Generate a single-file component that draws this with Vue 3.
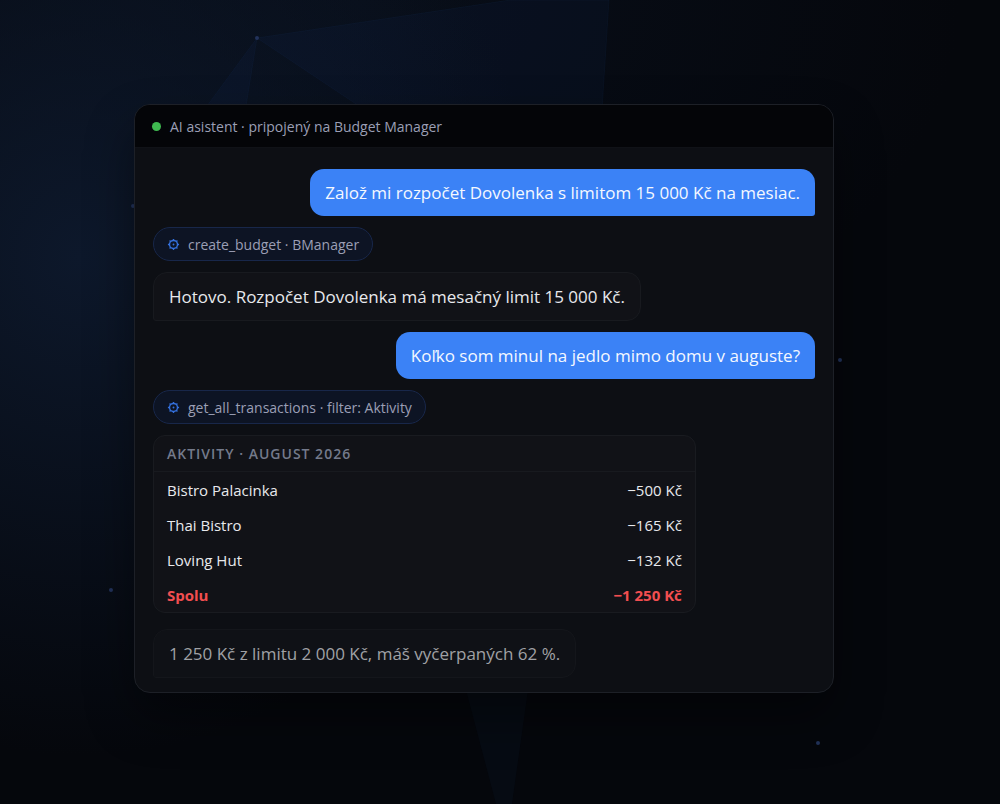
<script setup>
const messages = [
  { kind: 'user', text: 'Založ mi rozpočet Dovolenka s limitom 15 000 Kč na mesiac.' },
  { kind: 'tool', text: 'create_budget · BManager' },
  { kind: 'bot', text: 'Hotovo. Rozpočet Dovolenka má mesačný limit 15 000 Kč.' },
  { kind: 'user', text: 'Koľko som minul na jedlo mimo domu v auguste?' },
  { kind: 'tool', text: 'get_all_transactions · filter: Aktivity' },
]

const rows = [
  { name: 'Bistro Palacinka', amount: '−500 Kč' },
  { name: 'Thai Bistro', amount: '−165 Kč' },
  { name: 'Loving Hut', amount: '−132 Kč' },
]
</script>

<template>
  <main class="scene">
    <svg class="backdrop" viewBox="0 0 1000 804" preserveAspectRatio="xMidYMid slice" aria-hidden="true">
      <g class="facets">
        <path d="M257 38 510 0H609L602 110H365Z" />
        <path d="M257 38 207 106H246Z" />
        <path class="faint" d="M466 690H528L512 804H496Z" />
      </g>
      <g class="nodes">
        <circle cx="257" cy="38" r="2" />
        <circle cx="133" cy="206" r="2" />
        <circle cx="840" cy="360" r="2" />
        <circle cx="111" cy="590" r="2" />
        <circle cx="818" cy="743" r="2" />
      </g>
    </svg>

    <section class="panel">
      <header class="panel-head">
        <span class="status"></span>
        <h1>AI asistent · pripojený na Budget Manager</h1>
      </header>

      <div class="chat">
        <template v-for="(m, i) in messages" :key="i">
          <div v-if="m.kind === 'tool'" class="chip">
            <svg class="gear" viewBox="0 0 14 14" aria-hidden="true">
              <circle cx="7" cy="7" r="4.3" />
              <path d="M7 1v1.7M7 11.3v1.7M1 7h1.7M11.3 7h1.7M2.8 2.8l1.2 1.2M10 10l1.2 1.2M2.8 11.2l1.2-1.2M10 4l1.2-1.2" />
              <circle class="hub" cx="7" cy="7" r="1" />
            </svg>
            <span>{{ m.text }}</span>
          </div>
          <p v-else class="bubble" :class="m.kind">{{ m.text }}</p>
        </template>

        <div class="card">
          <table>
            <thead>
              <tr><th colspan="2" scope="colgroup">AKTIVITY · AUGUST 2026</th></tr>
            </thead>
            <tbody>
              <tr v-for="r in rows" :key="r.name">
                <td>{{ r.name }}</td>
                <td class="amount">{{ r.amount }}</td>
              </tr>
            </tbody>
            <tfoot>
              <tr>
                <td>Spolu</td>
                <td class="amount">−1 250 Kč</td>
              </tr>
            </tfoot>
          </table>
        </div>

        <p class="bubble bot pending">1 250 Kč z limitu 2 000 Kč, máš vyčerpaných 62 %.</p>
      </div>
    </section>
  </main>
</template>

<style>
body {
  margin: 0;
  background: #05070c;
}
</style>

<style scoped>
.scene {
  position: relative;
  box-sizing: border-box;
  min-height: 100vh;
  padding: 104px 166px 104px 134px;
  overflow: hidden;
  background:
    radial-gradient(ellipse 46% 62% at 8% 32%, #0d182b 0%, rgba(13, 24, 43, 0) 100%),
    radial-gradient(ellipse 60% 50% at 36% 0%, #080e19 0%, rgba(8, 14, 25, 0) 100%),
    #05070c;
  font-family: "Open Sans", "Noto Sans", sans-serif;
}

.backdrop {
  position: absolute;
  inset: 0;
  width: 100%;
  height: 100%;
}

.facets path {
  fill: rgba(24, 50, 120, 0.09);
  stroke: rgba(50, 90, 150, 0.08);
}

.facets .faint {
  fill: rgba(20, 60, 100, 0.08);
  stroke: none;
}

.nodes circle {
  fill: #22325a;
}

.panel {
  position: relative;
  border: 1px solid #1d2027;
  border-radius: 16px;
  overflow: hidden;
  background: #0d0f14;
  box-shadow: 0 24px 48px rgba(0, 0, 0, 0.4);
}

.panel-head {
  display: flex;
  align-items: center;
  gap: 9px;
  height: 42px;
  padding: 0 17px;
  border-bottom: 1px solid #101217;
  background: #040508;
}

.status {
  width: 9px;
  height: 9px;
  border-radius: 50%;
  background: #3fb950;
}

h1 {
  margin: 0;
  color: #9b9fb5;
  font-size: 14px;
  font-weight: 400;
}

.chat {
  display: flex;
  flex-direction: column;
  align-items: flex-start;
  gap: 11px;
  padding: 21px 18px 14px;
}

.bubble {
  margin: 0;
  padding: 11px 15px;
  border-radius: 14px;
  font-size: 17px;
  line-height: 25px;
}

.bubble.user {
  align-self: flex-end;
  border-bottom-right-radius: 3px;
  background: #3b82f6;
  color: #f4f8ff;
}

.bubble.bot {
  border: 1px solid #181a1f;
  border-bottom-left-radius: 3px;
  background: #111217;
  color: #e8e9ed;
}

.bubble.pending {
  margin-top: 5px;
  border-color: #14161b;
  background: #0f1116;
  color: #a0a1a5;
}

.chip {
  display: flex;
  align-items: center;
  gap: 8px;
  box-sizing: border-box;
  height: 34px;
  padding: 0 13px;
  border: 1px solid #18274a;
  border-radius: 17px;
  background: #0d1424;
  color: #9b9fb5;
  font-size: 14px;
}

.gear {
  width: 13px;
  height: 13px;
  fill: none;
  stroke: #3470dc;
  stroke-width: 1.5;
}

.gear .hub {
  fill: #3470dc;
  stroke: none;
}

.card {
  box-sizing: border-box;
  width: 82%;
  border: 1px solid #191b20;
  border-radius: 12px;
  overflow: hidden;
  background: #111217;
}

table {
  width: 100%;
  border-collapse: separate;
  border-spacing: 0;
  color: #e8e9ed;
  font-size: 15px;
}

th,
td {
  height: 35px;
  padding: 0 13px;
  text-align: left;
  line-height: 20px;
}

th {
  border-bottom: 1px solid #181a1f;
  color: #747a8b;
  font-size: 14px;
  font-weight: 600;
  letter-spacing: 1px;
}

.amount {
  text-align: right;
}

tfoot td {
  color: #f24e50;
  font-weight: 700;
}
</style>
